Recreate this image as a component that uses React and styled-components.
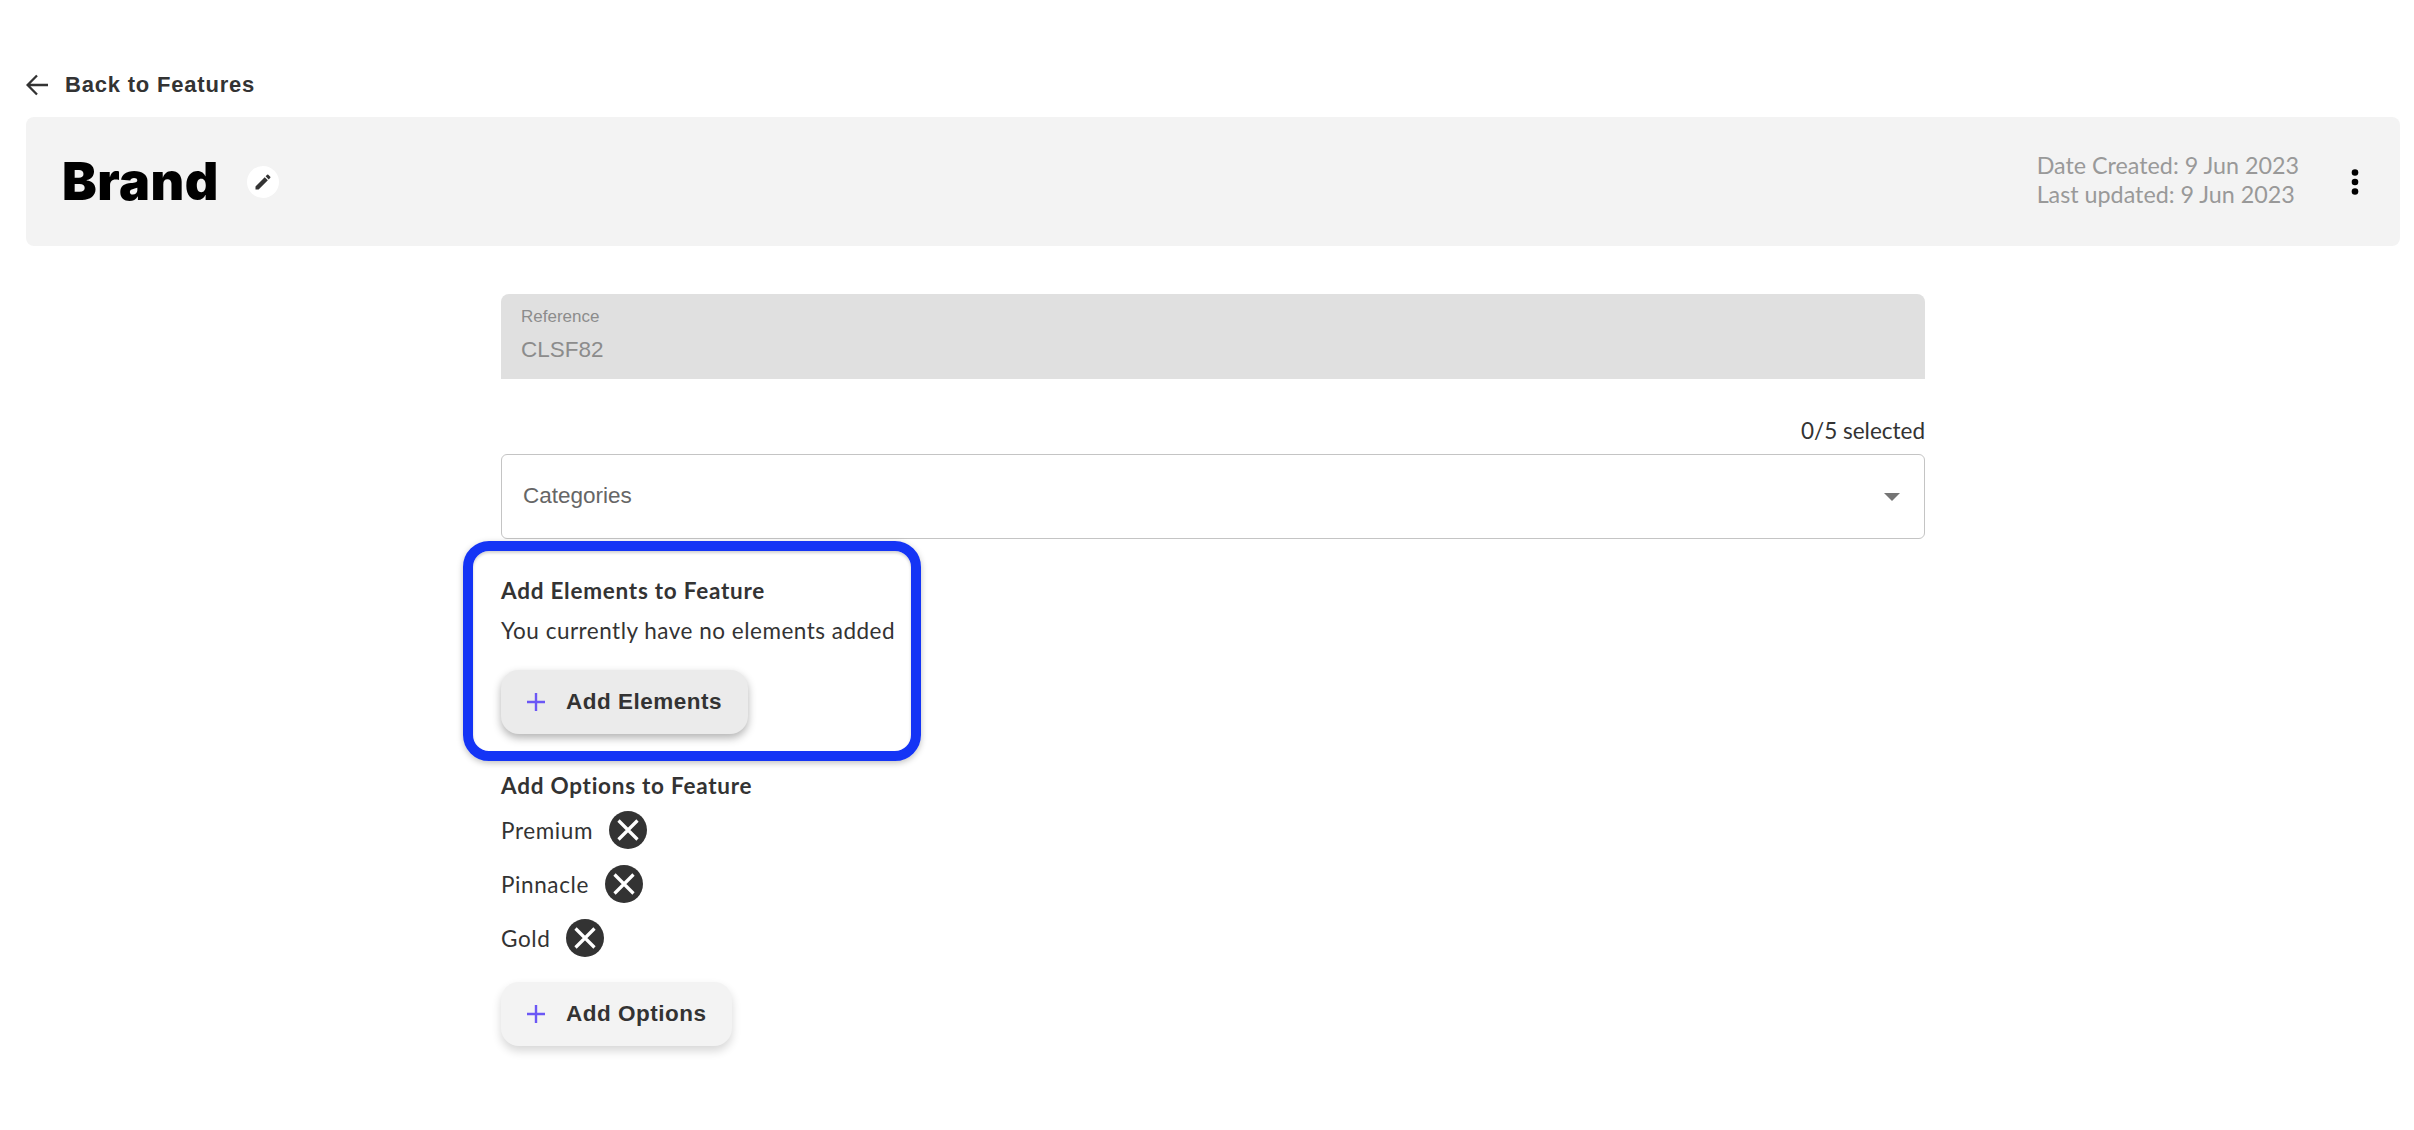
import React from 'react';
import styled, { createGlobalStyle } from 'styled-components';

const Global = createGlobalStyle`
  html, body { margin: 0; padding: 0; background: #fff; }
  body { font-family: "Lato", "Liberation Sans", sans-serif; color: #333; }
  * { box-sizing: border-box; }
`;

const Page = styled.div`
  width: 2414px;
  height: 1130px;
  padding: 69px 14px 0 26px;
  overflow: hidden;
`;
const BackRow = styled.div`
  display: flex;
  align-items: center;
  gap: 17px;
  height: 32px;
  margin-bottom: 16px;
  font: 700 22px/32px "Liberation Sans", sans-serif;
  letter-spacing: 0.8px;
  color: #333;
`;
const HeaderPanel = styled.header`
  height: 129px;
  background: #f3f3f3;
  border-radius: 8px;
  display: flex;
  align-items: center;
  padding: 0 41px 0 36px;
`;
const Title = styled.h1`
  margin: 0;
  font: 900 52px/60px "Inter", sans-serif;
  letter-spacing: 0.5px;
  color: #000;
`;
const EditButton = styled.span`
  width: 32px;
  height: 32px;
  border-radius: 50%;
  background: #fff;
  margin-left: 28px;
  display: flex;
  align-items: center;
  justify-content: center;
`;
const Dates = styled.div`
  margin-left: auto;
  padding-bottom: 3px;
  font-size: 23.3px;
  line-height: 29px;
  color: #999;
`;
const MoreIcon = styled.svg`
  flex: none;
  margin-left: 52px;
`;
const Form = styled.main`
  position: relative;
  width: 1424px;
  margin: 48px auto 0;
`;
const ReadOnlyField = styled.div`
  height: 85px;
  background: #e0e0e0;
  border-radius: 8px 8px 0 0;
  padding: 13px 20px 0;
  font-family: "Liberation Sans", sans-serif;
  color: #8c8c8c;
`;
const FieldLabel = styled.div`
  font-size: 17px;
  line-height: 20px;
`;
const FieldValue = styled.div`
  margin-top: 9px;
  font-size: 22.5px;
  line-height: 28px;
`;
const Counter = styled.div`
  margin-top: 38px;
  height: 37px;
  text-align: right;
  font-size: 22.5px;
  line-height: 28px;
  color: #333;
`;
const SelectBox = styled.div`
  height: 85px;
  border: 1.5px solid #c4c4c4;
  border-radius: 6px;
  padding: 0 21px 2px 21px;
  display: flex;
  align-items: center;
  justify-content: space-between;
  font: 400 22.5px/28px "Liberation Sans", sans-serif;
  color: #666;
`;
const Caret = styled.span`
  width: 0;
  height: 0;
  border-left: 8px solid transparent;
  border-right: 8px solid transparent;
  border-top: 8px solid #757575;
  margin-top: 2px;
  margin-right: 3px;
`;
const Section = styled.section`
  padding-top: ${p => p.$top}px;
`;
const SectionTitle = styled.h2`
  margin: 0;
  font: 700 22.5px/30px "Lato", sans-serif;
  letter-spacing: 0.75px;
  color: #333;
`;
const Note = styled.p`
  margin: 10px 0 0;
  font-size: 22.5px;
  line-height: 30px;
  letter-spacing: 0.5px;
  color: #333;
`;
const ActionButton = styled.button`
  display: flex;
  align-items: center;
  gap: 20px;
  height: 64px;
  width: ${p => p.$w}px;
  margin-top: ${p => p.$top}px;
  padding: 0 25px;
  border: 0;
  border-radius: 18px;
  background: ${p => p.$bg};
  box-shadow: ${p => p.$shadow};
  font: 700 22.5px/30px "Liberation Sans", sans-serif;
  letter-spacing: 0.5px;
  white-space: nowrap;
  color: #333;
`;
const PlusIcon = styled.svg`
  flex: none;
`;
const OptionRow = styled.div`
  display: flex;
  align-items: center;
  gap: 16px;
  height: 54px;
  font-size: 22.5px;
  letter-spacing: 0.6px;
  color: #333;
`;
const OptionList = styled.div`
  margin-top: 2px;
`;
const CloseIcon = styled.svg`
  flex: none;
`;
const Highlight = styled.div`
  position: absolute;
  left: -38px;
  top: 247px;
  width: 458px;
  height: 220px;
  border: 10px solid #1434f5;
  border-radius: 26px;
  box-shadow: 0 2px 6px rgba(0,0,0,.25), inset 0 2px 3px rgba(0,0,0,.18);
  pointer-events: none;
`;

const Plus = () => (
  <PlusIcon width="20" height="20" viewBox="0 0 20 20" fill="none" stroke="#6b57f5" strokeWidth="2.4">
    <path d="M10 1v18M1 10h18" />
  </PlusIcon>
);
const Close = () => (
  <CloseIcon width="38" height="38" viewBox="0 0 38 38">
    <circle cx="19" cy="19" r="19" fill="#333" />
    <path d="M9.5 9.5l19 19M28.5 9.5l-19 19" stroke="#fff" strokeWidth="3.2" fill="none" />
  </CloseIcon>
);

export default function App() {
  return (
    <Page>
      <Global />
      <BackRow>
        <svg width="22" height="22" viewBox="0 0 22 22" fill="none" stroke="#333" strokeWidth="2.3">
          <path d="M22 11H2M11 1.5L1.6 11 11 20.5" />
        </svg>
        Back to Features
      </BackRow>
      <HeaderPanel>
        <Title>Brand</Title>
        <EditButton>
          <svg width="20" height="20" viewBox="0 0 24 24" fill="#333">
            <path d="M3 17.25V21h3.75L17.81 9.94l-3.75-3.75L3 17.25zM20.71 7.04a1 1 0 0 0 0-1.41l-2.34-2.34a1 1 0 0 0-1.41 0l-1.83 1.83 3.75 3.75 1.83-1.83z" />
          </svg>
        </EditButton>
        <Dates>
          <div>Date Created: 9 Jun 2023</div>
          <div>Last updated: 9 Jun 2023</div>
        </Dates>
        <MoreIcon width="8" height="26" viewBox="0 0 8 26" fill="#000">
          <circle cx="4" cy="3.5" r="3.3" />
          <circle cx="4" cy="13" r="3.3" />
          <circle cx="4" cy="22.5" r="3.3" />
        </MoreIcon>
      </HeaderPanel>
      <Form>
        <ReadOnlyField>
          <FieldLabel>Reference</FieldLabel>
          <FieldValue>CLSF82</FieldValue>
        </ReadOnlyField>
        <Counter>0/5 selected</Counter>
        <SelectBox>
          Categories
          <Caret />
        </SelectBox>
        <Section $top={37}>
          <SectionTitle>Add Elements to Feature</SectionTitle>
          <Note>You currently have no elements added</Note>
          <ActionButton $w={247} $top={24} $bg="#ebebeb" $shadow="0 4px 8px rgba(0,0,0,.3)">
            <Plus />
            Add Elements
          </ActionButton>
        </Section>
        <Section $top={37}>
          <SectionTitle>Add Options to Feature</SectionTitle>
          <OptionList>
            <OptionRow>Premium <Close /></OptionRow>
            <OptionRow>Pinnacle <Close /></OptionRow>
            <OptionRow>Gold <Close /></OptionRow>
          </OptionList>
          <ActionButton $w={231} $top={17} $bg="#f3f3f3" $shadow="0 5px 10px rgba(0,0,0,.16)">
            <Plus />
            Add Options
          </ActionButton>
        </Section>
        <Highlight />
      </Form>
    </Page>
  );
}
